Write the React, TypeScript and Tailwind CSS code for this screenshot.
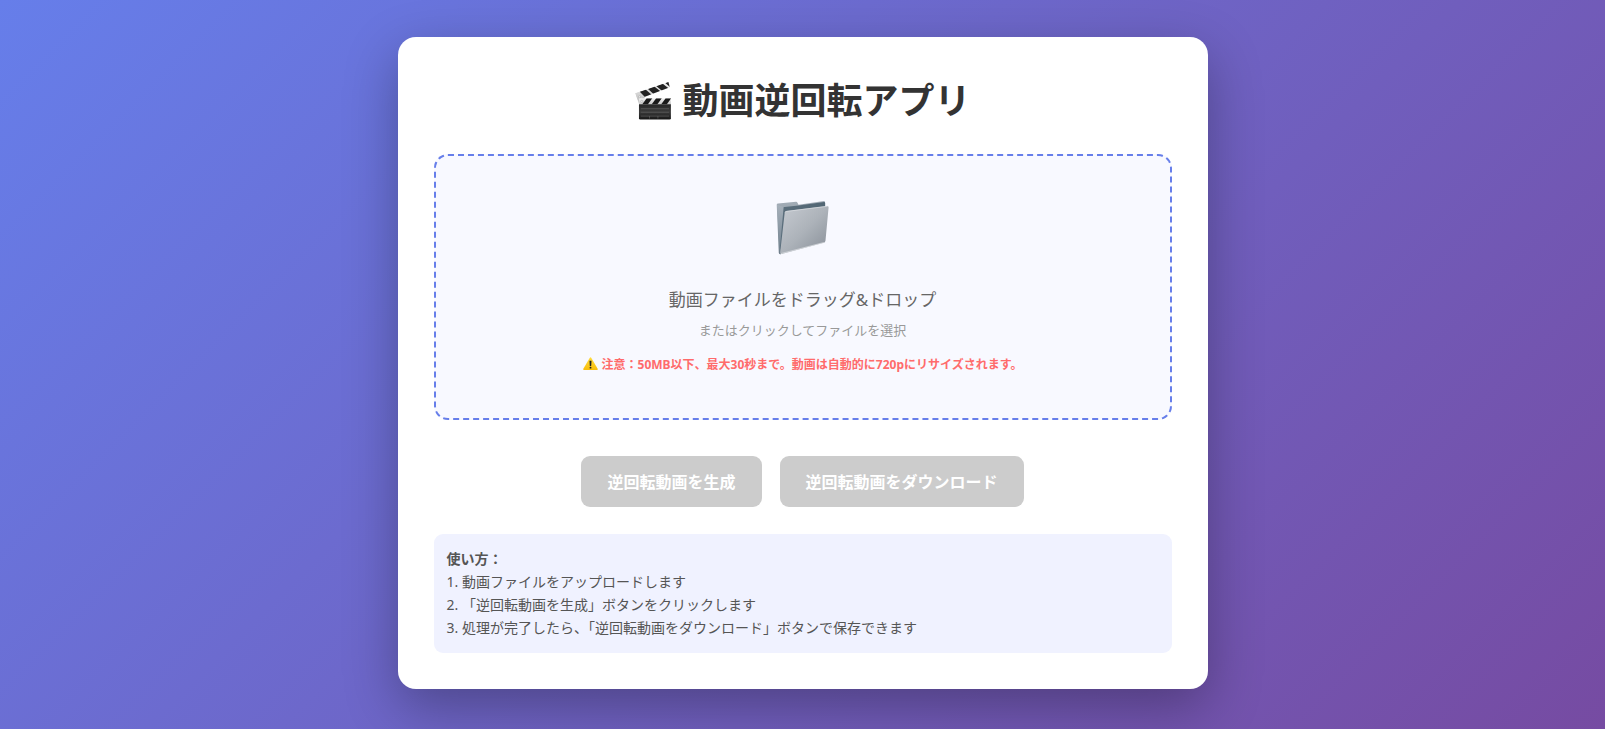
import React from "react";

function ClapperIcon() {
  return (
    <svg aria-hidden="true" viewBox="12 15 108 114" className="h-10 w-[38px] shrink-0">
      <defs>
        <linearGradient id="slate" x1="0" y1="0" x2="0" y2="1">
          <stop offset="0" stopColor="#262626" />
          <stop offset="0.5" stopColor="#3a3a3a" />
          <stop offset="1" stopColor="#161616" />
        </linearGradient>
        <linearGradient id="stick" x1="0" y1="0" x2="0" y2="1">
          <stop offset="0" stopColor="#f4f4f4" />
          <stop offset="1" stopColor="#c4c4c4" />
        </linearGradient>
        <clipPath id="upper">
          <path d="M16 50 L110 18 L114 33 L22 68 Z" />
        </clipPath>
        <clipPath id="lower">
          <path d="M26 64 H117 V82 H26 Z" />
        </clipPath>
      </defs>
      <path d="M16 50 L30 46 L42 60 V80 H26 Z" fill="#c2c2c2" />
      <path d="M16 50 L110 18 L114 33 L22 68 Z" fill="url(#stick)" />
      <g clipPath="url(#upper)" fill="#222">
        <path d="M27 44 L45 39 L63 55 L45 63 Z" />
        <path d="M51 37 L69 30 L88 45 L70 54 Z" />
        <path d="M75 29 L93 22 L112 37 L94 45 Z" />
        <path d="M100 20 L112 16 L122 28 L117 34 Z" />
      </g>
      <path d="M26 64 H117 V82 H26 Z" fill="url(#stick)" />
      <g clipPath="url(#lower)" fill="#1a1a1a">
        <path d="M48 64 H64 L51 82 H35 Z" />
        <path d="M75 64 H91 L78 82 H62 Z" />
        <path d="M102 64 H118 L105 82 H89 Z" />
      </g>
      <circle cx="28" cy="60" r="3" fill="#eee" stroke="#888" />
      <circle cx="34" cy="73" r="3" fill="#eee" stroke="#888" />
      <path d="M26 81 H117 V121 Q117 125 113 125 H30 Q26 125 26 121 Z" fill="url(#slate)" />
      <path d="M31 94 H112 M31 104 H112 M31 115 H112" stroke="#727272" strokeWidth="1.5" />
      <path d="M56 115 V122 M80 115 V122" stroke="#727272" strokeWidth="1.5" />
    </svg>
  );
}

function FolderIcon() {
  return (
    <svg aria-hidden="true" viewBox="48 33 156 162" className="h-14 w-[54px]">
      <defs>
        <linearGradient id="folderBack" x1="0" y1="0" x2="0" y2="1">
          <stop offset="0" stopColor="#a3adb7" />
          <stop offset="1" stopColor="#6c7c88" />
        </linearGradient>
        <linearGradient id="folderInner" x1="0" y1="0" x2="1" y2="0">
          <stop offset="0" stopColor="#5b6e7c" />
          <stop offset="1" stopColor="#516674" />
        </linearGradient>
        <linearGradient id="folderEdge" x1="0" y1="0" x2="0" y2="1">
          <stop offset="0" stopColor="#a6b0ba" />
          <stop offset="1" stopColor="#71828f" />
        </linearGradient>
        <linearGradient id="folderFront" x1="0" y1="0" x2="1" y2="1">
          <stop offset="0" stopColor="#c6cbd1" />
          <stop offset="0.5" stopColor="#adb3ba" />
          <stop offset="1" stopColor="#878e97" />
        </linearGradient>
      </defs>
      <path d="M50 47 Q50 43 54 43 L106 38 Q109 38 110 41 L113 47 L186 36 Q190 36 190 40 V120 L62 190 Q57 191 56 186 Z" fill="url(#folderBack)" />
      <path d="M66 54 L113 49 L187 39 Q190 39 190 42 V90 L64 182 L58 170 Z" fill="url(#folderInner)" />
      <path d="M51 47 L70 53 L63 130 L58 184 Z" fill="url(#folderEdge)" />
      <path d="M73 70 Q74 66 78 65 L196 50 Q201 50 200 55 L191 151 Q190 156 186 157 L64 189 Q59 190 60 185 Z" fill="url(#folderFront)" />
      <path d="M74 69 Q75 66 78 66 L197 51" fill="none" stroke="#dde1e5" strokeWidth="2" />
      <path d="M62 188 L186 156" fill="none" stroke="#dde0e4" strokeWidth="2" />
    </svg>
  );
}

function WarningIcon() {
  return (
    <svg aria-hidden="true" viewBox="0 0 45 48" className="h-4 w-[15px] shrink-0">
      <defs>
        <linearGradient id="warn" x1="0" y1="0" x2="0" y2="1">
          <stop offset="0" stopColor="#ffdc3c" />
          <stop offset="1" stopColor="#f8bd0c" />
        </linearGradient>
      </defs>
      <path d="M20 3 Q22.500 -1 25 3 L44 35 Q45 39 41 39 H4 Q0 39 1 35 Z" fill="url(#warn)" />
      <path d="M19.500 11 H25.500 L24.500 27 H20.500 Z" fill="#222" />
      <circle cx="22.500" cy="32" r="2.800" fill="#222" />
    </svg>
  );
}

const buttonClass =
  "h-[51px] rounded-[9px] bg-[#667eea] px-[26px] text-base font-bold text-white disabled:cursor-not-allowed disabled:bg-[#cccccc]";

export default function App() {
  return (
    <main
      lang="ja"
      className="flex min-h-screen items-center justify-center bg-linear-[135deg] from-[#667eea] to-[#764ba2] px-4 pt-[37px] pb-10 font-['Noto_Sans','Noto_Sans_CJK_JP',sans-serif]"
    >
      <div className="w-full max-w-[810px] rounded-[18px] bg-white p-9 shadow-[0_18px_54px_rgba(0,0,0,0.3)]">
        <h1 className="mb-[25px] flex items-center justify-center gap-[10px] text-4xl/[56px] font-bold text-[#333333]">
          <ClapperIcon />
          動画逆回転アプリ
        </h1>

        <label className="flex cursor-pointer flex-col items-center rounded-[14px] border-2 border-dashed border-[#667eea] bg-[#f8f9ff] px-9 py-11 text-center">
          <FolderIcon />
          <span className="mt-[31px] text-[17px]/[26px] text-[#666666]">動画ファイルをドラッグ&amp;ドロップ</span>
          <span className="mt-[7px] text-[13px]/[20px] text-[#999999]">またはクリックしてファイルを選択</span>
          <span className="mt-4 flex items-center gap-1 text-xs/[18px] font-bold text-[#ff6b6b]">
            <WarningIcon />
            注意：50MB以下、最大30秒まで。動画は自動的に720pにリサイズされます。
          </span>
          <input type="file" accept="video/*" className="hidden" />
        </label>

        <div className="mt-9 flex flex-wrap justify-center gap-[18px]">
          <button type="button" disabled className={buttonClass}>
            逆回転動画を生成
          </button>
          <button type="button" disabled className={buttonClass}>
            逆回転動画をダウンロード
          </button>
        </div>

        <section className="mt-[27px] rounded-[9px] bg-[#f0f2ff] px-[13px] pt-[13px] pb-[14px] text-sm/[23px] text-[#555555]">
          <strong className="block font-bold">使い方：</strong>
          <p>1. 動画ファイルをアップロードします</p>
          <p>2. 「逆回転動画を生成」ボタンをクリックします</p>
          <p>3. 処理が完了したら、「逆回転動画をダウンロード」ボタンで保存できます</p>
        </section>
      </div>
    </main>
  );
}
